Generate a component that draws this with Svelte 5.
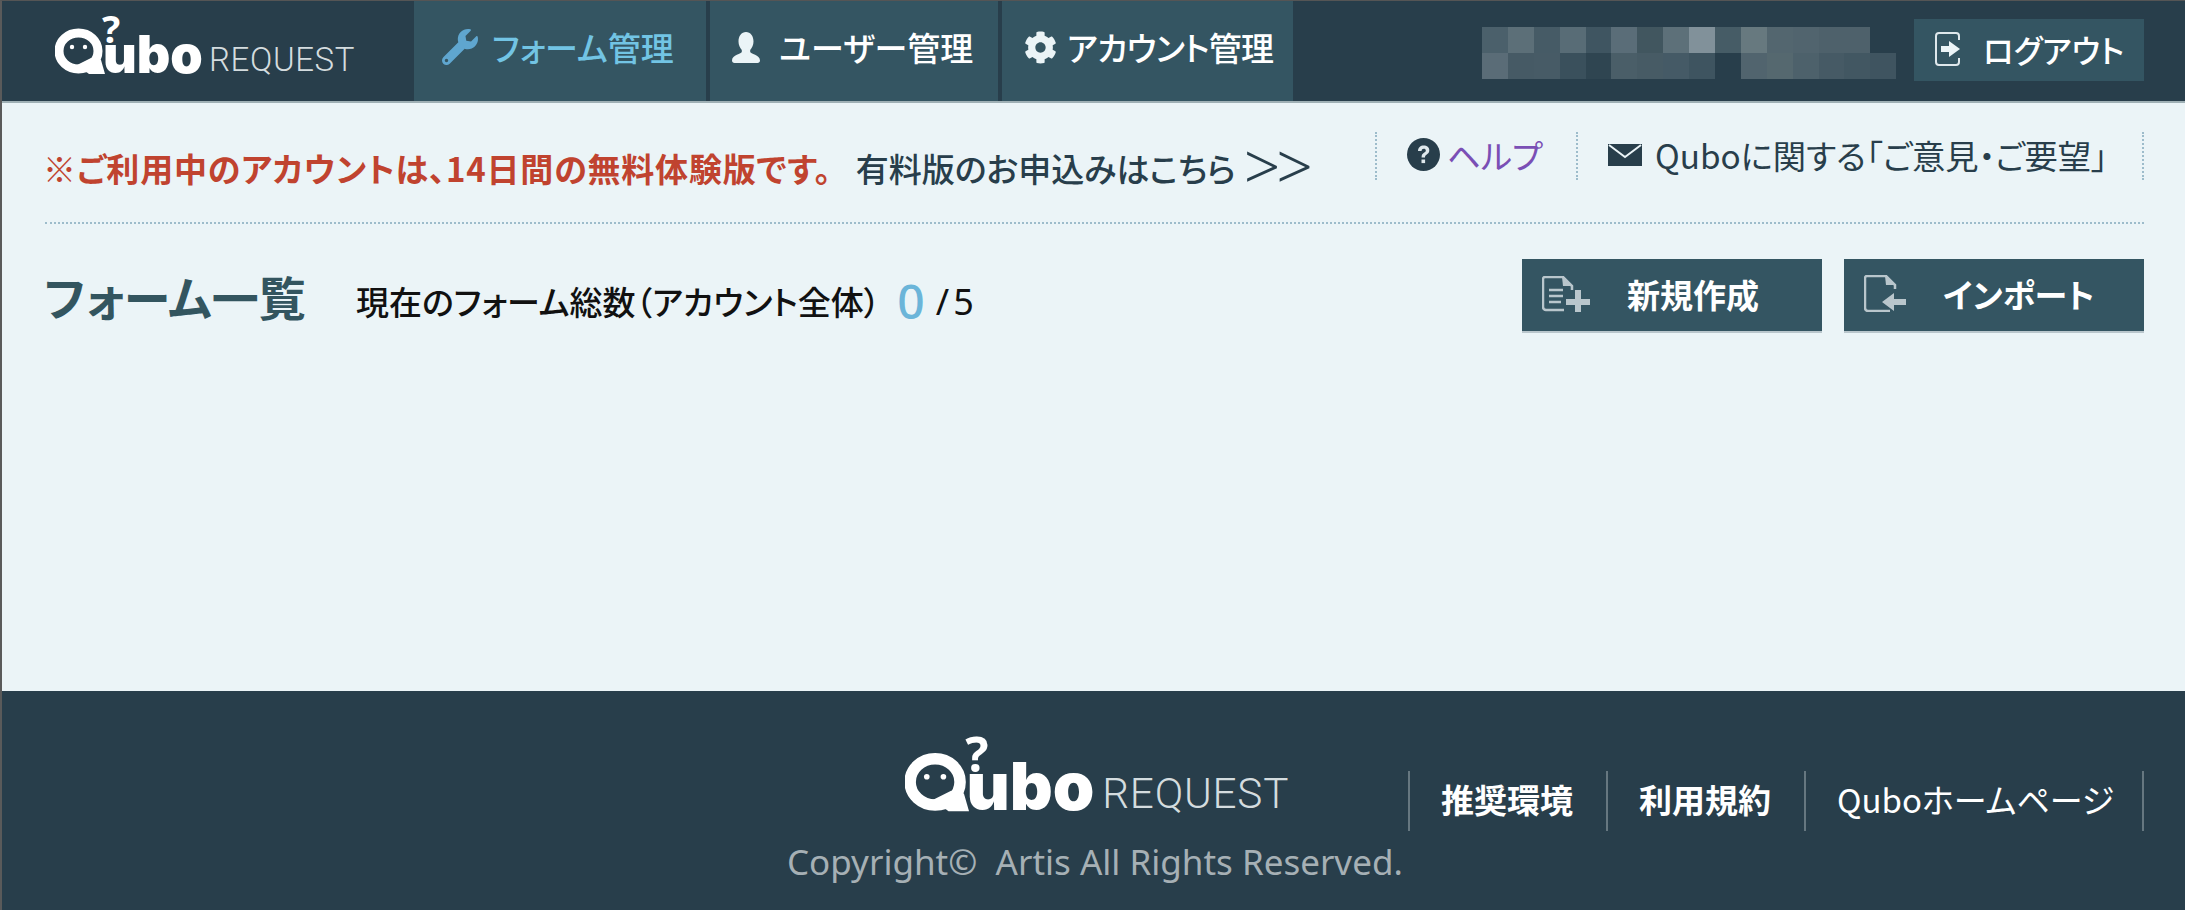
<script>
  const rowA = ['#4b606b','#5c6f78','#465b66','#586c76','#3f5561','#5a6d78','#41565f','#5d7079','#81919a','#465c66','#67797f','#53666f','#51646e','#4e616b','#4e616b'];
  const rowB = ['#5a6c77','#465a65','#475b66','#3a505c','#2f4551','#4a5e68','#475b65','#455a66','#3e5460','#283e4b','#51646e','#55686f','#4d616b','#465a65','#425762','#3f5460'];
</script>

{#snippet logo(cls)}
  <svg class={cls} viewBox="0 -16 310 88" aria-label="Qubo REQUEST">
    <ellipse cx="23.5" cy="33" rx="19.5" ry="18" fill="none" stroke="#fff" stroke-width="9"/>
    <circle cx="17" cy="29" r="2.2" fill="#fff"/>
    <circle cx="30" cy="29" r="2.2" fill="#fff"/>
    <path d="M22 47 L34 56 H50 L46 42 L36 40 Z" fill="#fff"/>
    <text x="47" y="25" class="q">?</text>
    <text x="48" y="55" class="ubo">ubo</text>
    <text x="154" y="53" class="req">REQUEST</text>
  </svg>
{/snippet}

<div class="page">
  <header class="head">
    <div class="brand">{@render logo('logo')}</div>
    <nav class="tabs">
      <div class="tab active">
        <svg class="ic wrench" viewBox="0 0 512 512"><path fill="currentColor" d="M507.73 109.1c-2.24-9.03-13.54-12.09-20.12-5.51l-74.36 74.36-67.88-11.31-11.31-67.88 74.36-74.36c6.62-6.62 3.43-17.9-5.66-20.16-47.38-11.74-99.55.91-136.58 37.93-39.64 39.64-50.55 97.1-34.05 147.2L18.74 402.76c-24.99 24.99-24.99 65.51 0 90.5 24.99 24.99 65.51 24.99 90.5 0l213.21-213.21c50.12 16.71 107.47 5.68 147.37-34.22 37.07-37.07 49.7-89.32 37.91-136.73zM64 472c-13.25 0-24-10.75-24-24 0-13.26 10.75-24 24-24s24 10.74 24 24c0 13.25-10.75 24-24 24z"/></svg>
        <span>フォーム管理</span>
      </div>
      <div class="tab">
        <svg class="ic user" viewBox="0 0 28 31"><path fill="#ebf4f7" d="M14 0c4.500 0 7.500 4 7.500 9.500 0 3.500-1.500 6.500-3.300 8.500v2c0 1.500 9.800 3 9.800 8.500 0 1.500-1 2.500-2.500 2.500h-23C1 31 0 30 0 28.500 0 23 9.800 21.500 9.800 20v-2C8 16 6.500 13 6.500 9.500 6.500 4 9.500 0 14 0z"/></svg>
        <span>ユーザー管理</span>
      </div>
      <div class="tab">
        <svg class="ic cog" viewBox="0 0 512 512"><path fill="#ebf4f7" d="M487.4 315.7l-42.6-24.6c4.3-23.2 4.3-47 0-70.2l42.6-24.6c4.9-2.8 7.1-8.6 5.5-14-11.1-35.6-30-67.8-54.7-94.6-3.8-4.1-10-5.1-14.8-2.3L380.8 110c-17.9-15.4-38.5-27.3-60.8-35.1V25.8c0-5.600-3.900-10.500-9.400-11.700-36.700-8.200-74.300-7.800-109.200 0-5.500 1.200-9.400 6.100-9.400 11.700V75c-22.200 7.900-42.800 19.800-60.800 35.100L88.700 85.500c-4.900-2.800-11-1.900-14.800 2.300-24.700 26.700-43.600 58.900-54.700 94.600-1.700 5.400.6 11.200 5.500 14L67.300 221c-4.300 23.200-4.300 47 0 70.200l-42.600 24.600c-4.900 2.800-7.100 8.600-5.500 14 11.100 35.600 30 67.800 54.700 94.600 3.800 4.100 10 5.100 14.800 2.300l42.600-24.600c17.900 15.400 38.500 27.300 60.800 35.100v49.200c0 5.600 3.900 10.500 9.400 11.700 36.700 8.200 74.300 7.800 109.200 0 5.500-1.200 9.400-6.100 9.400-11.700v-49.200c22.200-7.900 42.800-19.800 60.800-35.100l42.600 24.600c4.900 2.800 11 1.900 14.800-2.300 24.700-26.700 43.600-58.900 54.700-94.600 1.500-5.500-.7-11.300-5.600-14.100zM256 336c-44.100 0-80-35.900-80-80s35.900-80 80-80 80 35.900 80 80-35.900 80-80 80z"/></svg>
        <span>アカウント管理</span>
      </div>
    </nav>
    <div class="mosaic" aria-hidden="true">
      <div class="mrow">{#each rowA as c}<i style:background={c}></i>{/each}</div>
      <div class="mrow">{#each rowB as c}<i style:background={c}></i>{/each}</div>
    </div>
    <div class="logout">
      <svg class="ic out" viewBox="0 0 26 34">
        <path d="M24 8V4a3 3 0 0 0-3-3H4a3 3 0 0 0-3 3v26a3 3 0 0 0 3 3h17a3 3 0 0 0 3-3v-4" fill="none" stroke="#dfe8ec" stroke-width="2"/>
        <path d="M6 14h8V9l11 8-11 8v-5H6z" fill="#ebf4f7"/>
      </svg>
      <span>ログアウト</span>
    </div>
  </header>

  <main class="main">
    <div class="topline">
      <p class="notice">
        <strong>※ご利用中のアカウントは、14日間の無料体験版です。</strong>
        <span class="apply">有料版のお申込みはこちら<span class="gt">&gt;&gt;</span></span>
      </p>
      <ul class="help">
        <li>
          <svg class="ic qm" viewBox="0 0 33 33"><circle cx="16.500" cy="16.500" r="16.500" fill="#283e4b"/><path d="M11 13c0-3.500 2.500-5.500 5.700-5.500 3.300 0 5.600 2 5.600 4.800 0 2.200-1.100 3.300-2.800 4.500-1.200.8-1.500 1.300-1.500 2.700h-3.400c0-2.500.6-3.500 2.300-4.700 1.300-.9 1.900-1.400 1.900-2.400 0-1-.8-1.700-2-1.700-1.300 0-2.200.8-2.200 2.300z" fill="#dfe8ec"/><rect x="14.500" y="21.500" width="3.600" height="3.600" fill="#dfe8ec"/></svg>
          <span class="purple">ヘルプ</span>
        </li>
        <li>
          <svg class="ic mail" viewBox="0 0 34 22"><path d="M0 0h34v22H0z" fill="#283e4b"/><path d="M1 1l16 12L33 1" fill="none" stroke="#ebf4f7" stroke-width="2"/></svg>
          <span>Quboに関する「ご意見・ご要望」</span>
        </li>
      </ul>
    </div>

    <div class="titlerow">
      <h1>フォーム一覧</h1>
      <p class="count">現在のフォーム総数（アカウント全体）<b>0</b><span>/5</span></p>
      <div class="actions">
        <button>
          <svg class="ic doc" viewBox="0 0 48 36">
            <path d="M30 14V10L21 1H3a2 2 0 0 0-2 2V31a3 3 0 0 0 3 3H22" fill="none" stroke="#b9c6cc" stroke-width="2.500"/>
            <path d="M20 1l1 9h9z" fill="#b9c6cc"/>
            <path d="M7 14h14M7 20h14M7 26h12" stroke="#b9c6cc" stroke-width="2.500"/>
            <path d="M33 14h6v9h9v6h-9v7h-6v-7h-9v-6h9z" fill="#b9c6cc"/>
          </svg>
          <span>新規作成</span>
        </button>
        <button>
          <svg class="ic doc imp" viewBox="0 0 42 37">
            <path d="M31 14V10L22 1H3a2 2 0 0 0-2 2V33a3 3 0 0 0 3 3H26" fill="none" stroke="#b9c6cc" stroke-width="2.500"/>
            <path d="M21 1l1 9h9z" fill="#b9c6cc"/>
            <path d="M42 24H30v-6L18 27l12 9v-6h12z" fill="#b9c6cc"/>
          </svg>
          <span>インポート</span>
        </button>
      </div>
    </div>
  </main>

  <footer class="foot">
    <div class="fcenter">
      {@render logo('logo big')}
      <p class="copy">Copyright©&nbsp; Artis All Rights Reserved.</p>
    </div>
    <ul class="flinks">
      <li class="b">推奨環境</li>
      <li class="b">利用規約</li>
      <li class="last">Quboホームページ</li>
    </ul>
  </footer>
</div>

<style>
  :global(body) { margin: 0; background: #ebf4f7; }
  .page {
    width: 2185px; height: 910px; box-sizing: border-box; overflow: hidden;
    display: flex; flex-direction: column;
    border-top: 1px solid #555; border-left: 2px solid #5a5a5a;
    font-family: "Noto Sans CJK JP", "Noto Sans", sans-serif;
    font-feature-settings: "palt";
    color: #283e4b;
  }
  p, ul, h1 { margin: 0; padding: 0; }
  li { list-style: none; }
  .ic { display: block; flex: none; }

  .head {
    height: 100px; flex: none; display: flex; align-items: stretch;
    background: #283e4b; border-bottom: 2px solid #9fb0b5;
  }
  .brand { width: 412px; flex: none; padding: 1px 0 0 53px; box-sizing: border-box; }
  .logo { display: block; width: 310px; height: 88px; }
  .logo.big { width: 397px; height: 113px; }
  .q { font: 700 38px "Noto Sans", sans-serif; fill: #fff; }
  .ubo { font: 900 52px "Inter", sans-serif; fill: #fff; }
  .req { font: 300 33px "Roboto", sans-serif; fill: #d4dcdf; letter-spacing: .6px; }

  .tabs { display: flex; gap: 4px; }
  .tab {
    display: flex; align-items: center; background: #345562; color: #fff;
    font-size: 33px; font-weight: 500; box-sizing: border-box; padding-bottom: 8px;
  }
  .tab:nth-child(1) { width: 292px; padding-left: 28px; gap: 14px; color: #72c4e4; }
  .tab:nth-child(2) { width: 288px; padding-left: 22px; gap: 19px; }
  .tab:nth-child(3) { width: 291px; padding-left: 22px; gap: 10px; }
  .tab:nth-child(3) span { letter-spacing: -.8px; }
  .wrench { width: 36px; height: 36px; color: #5fa6cf; }
  .user { width: 28px; height: 31px; }
  .cog { width: 33px; height: 33px; }

  .mosaic { margin-left: 189px; padding-top: 26px; width: 412px; flex: none; }
  .mrow { display: flex; height: 26px; }
  .mrow i { width: 25.900px; flex: none; }
  .logout {
    margin: 18px 0 0 20px; width: 230px; height: 62px; box-sizing: border-box;
    background: #345562; color: #fff; font-size: 31.500px; font-weight: 500;
    display: flex; align-items: center; padding: 0 0 2px 21px; gap: 22px;
  }
  .out { width: 26px; height: 34px; }

  .main { flex: 1; background: #ebf4f7; padding: 0 41px 0 43px; }
  .topline {
    height: 121px; box-sizing: border-box; border-bottom: 2px dotted #9dbccb;
    display: flex; justify-content: space-between; padding-top: 30px;
  }
  .notice { font-size: 33px; line-height: 44px; display: flex; padding-top: 13px; margin-left: -2px; white-space: nowrap; }
  .notice strong { color: #c0432f; font-weight: 700; letter-spacing: .8px; }
  .apply { margin-left: 24px; font-weight: 500; display: flex; }
  .gt { font: 300 64px/40px "Noto Sans", sans-serif; margin-left: 8px; letter-spacing: -4px; }
  .help {
    display: flex; height: 48px; margin-top: -1px; font-size: 33.300px;
    border-right: 2px dotted #9dbccb;
  }
  .help li {
    display: flex; align-items: center; border-left: 2px dotted #9dbccb; box-sizing: border-box;
    line-height: 40px; white-space: nowrap;
  }
  .help li:nth-child(1) { width: 201px; padding-left: 30px; gap: 7px; }
  .help li:nth-child(2) { width: 566px; padding-left: 30px; gap: 13px; }
  .help li span { margin-top: -2px; }
  .qm { width: 33px; height: 33px; margin-top: -4px; }
  .mail { width: 34px; height: 22px; margin-top: -2px; }
  .purple { color: #7a4fb5; }

  .titlerow { display: flex; align-items: flex-start; padding-top: 35px; }
  h1 { font-size: 47px; font-weight: 700; color: #33555f; line-height: 60px; width: 312px; flex: none; padding-top: 7px; margin-left: -1px; }
  .count {
    font-size: 33px; font-weight: 500; color: #111; line-height: 50px; margin-top: 17px;
    display: flex; align-items: baseline; white-space: nowrap;
  }
  .count b { font-size: 48px; font-weight: 500; color: #6bb5d9; margin: 0 11px 0 17px; font-family: "Noto Sans", sans-serif; line-height: 40px; translate: 0 4px; }
  .count span { font: 400 36px "Noto Sans", sans-serif; letter-spacing: 4px; }
  .actions { margin-left: auto; display: flex; gap: 22px; }
  button {
    width: 300px; height: 74px; border: 0; border-bottom: 2px solid #b9c6cc; padding: 0 0 3px 20px;
    background: #345562; color: #fff; font: 700 33px "Noto Sans CJK JP", sans-serif;
    font-feature-settings: "palt"; display: flex; align-items: center; gap: 37px;
  }
  .doc { width: 48px; height: 36px; }
  .doc.imp { width: 42px; height: 37px; }

  .foot {
    height: 219px; flex: none; background: #283e4b; position: relative; display: flex;
    color: #fff; box-sizing: border-box;
  }
  .fcenter { margin-left: 785px; padding-top: 28px; display: flex; flex-direction: column; width: 620px; }
  .fcenter .logo { margin-left: 118px; }
  .copy { font: 400 35px/50px "Noto Sans", sans-serif; color: #a6b0b5; margin-top: 5px; white-space: nowrap; }
  .flinks {
    display: flex; margin-top: 80px; height: 60px; margin-left: 1px;
    border-right: 2px solid #667780; font-size: 33px; line-height: 56px;
  }
  .flinks li { border-left: 2px solid #667780; padding: 0 31px; white-space: nowrap; }
  .flinks li.b { font-weight: 700; padding-right: 33px; }
  .flinks li.last { padding-right: 28px; }
</style>
